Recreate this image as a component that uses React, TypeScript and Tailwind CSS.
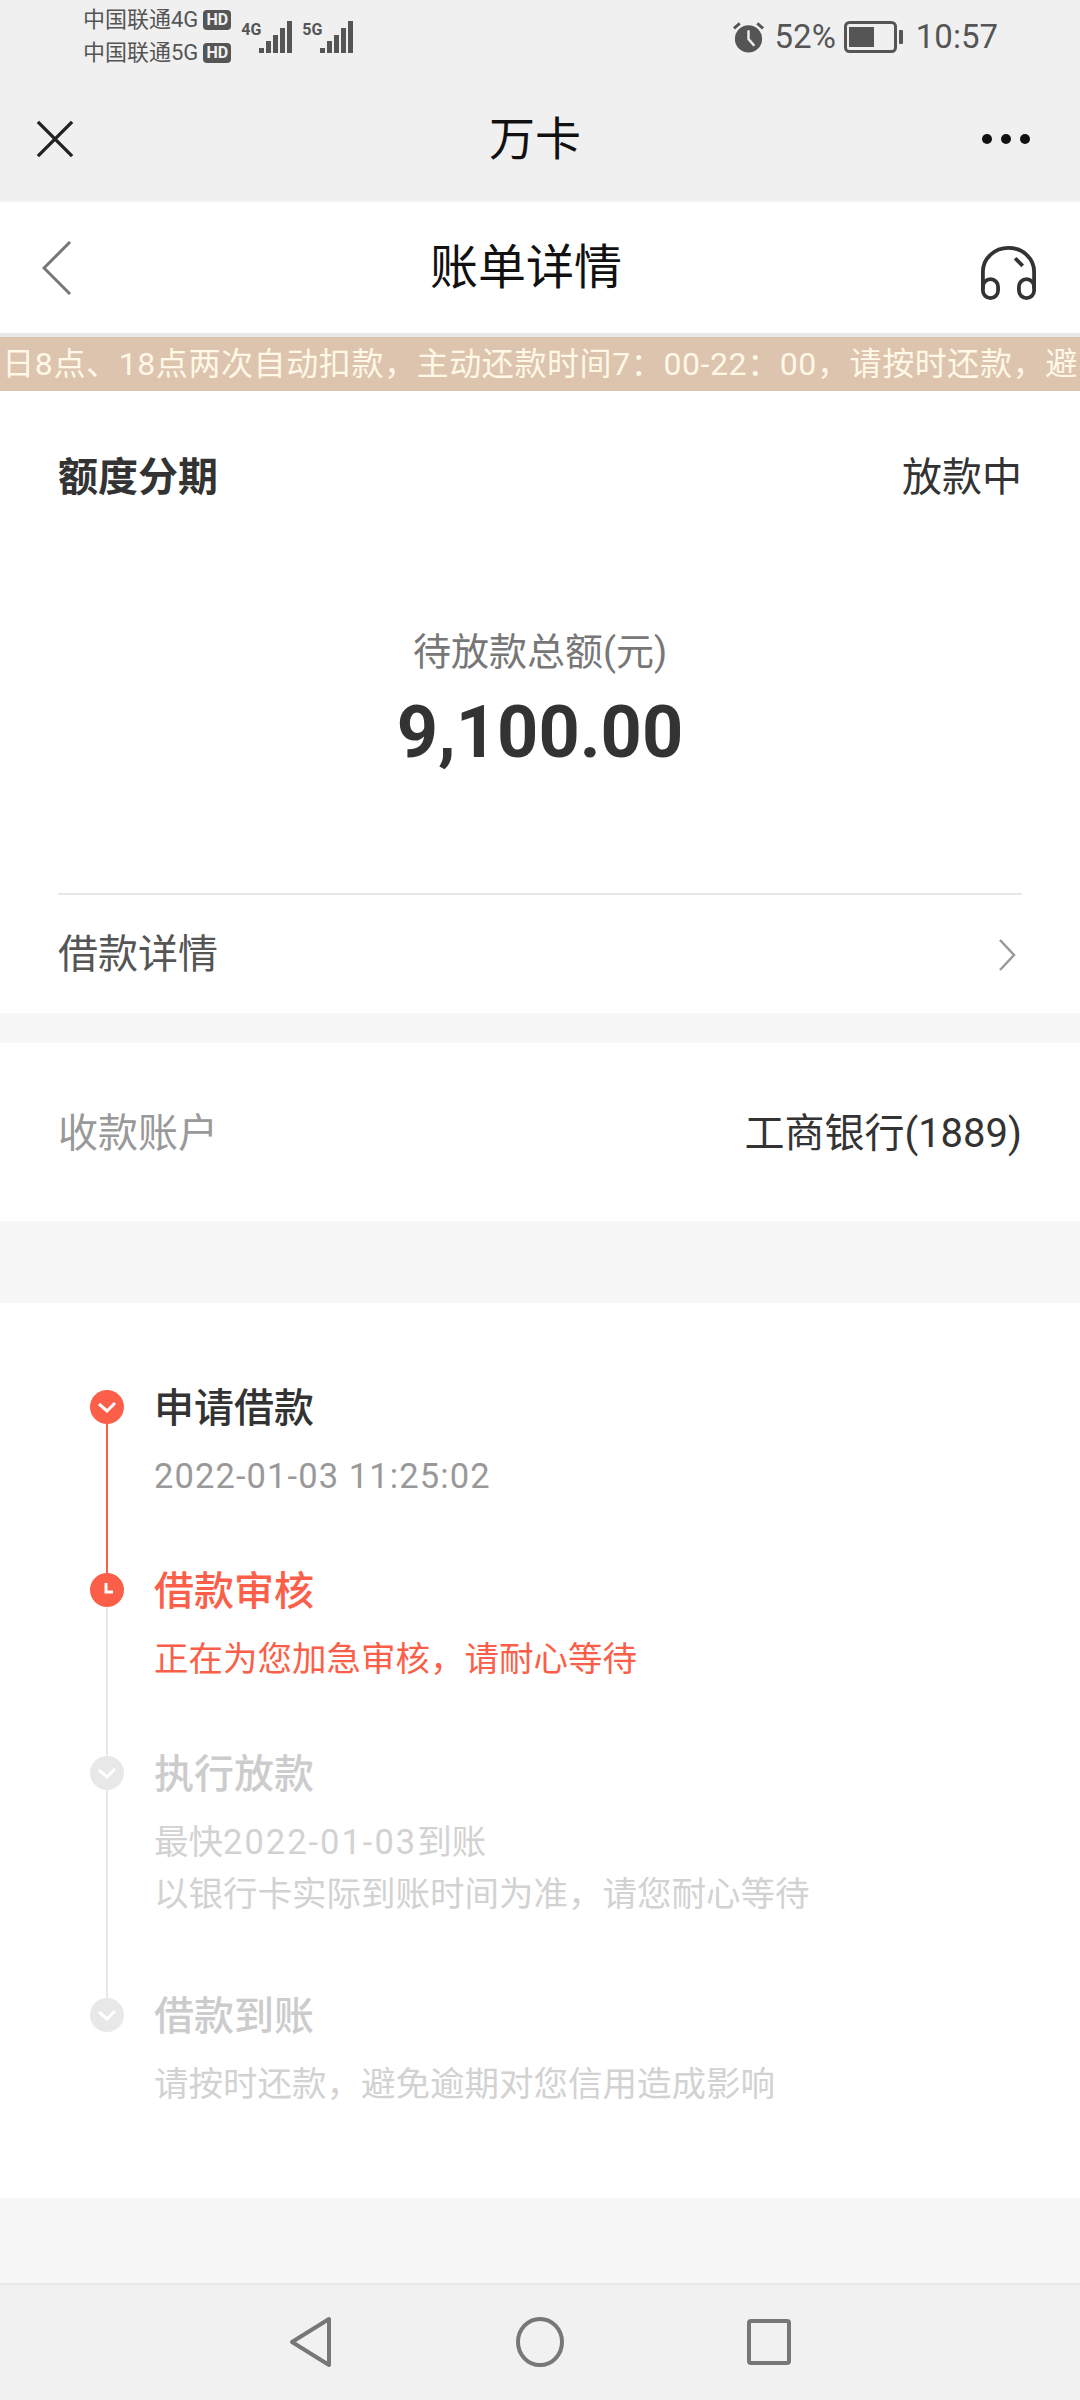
const FONT = "font-['Roboto','Noto_Sans_CJK_SC',sans-serif]";

const steps = [
  {
    title: '申请借款',
    lines: [<span className="tracking-[1.1px]">2022-01-03 11:25:02</span>],
    state: 'done',
    height: 'h-[183px]',
  },
  {
    title: '借款审核',
    lines: ['正在为您加急审核，请耐心等待'],
    state: 'active',
    height: 'h-[183px]',
  },
  {
    title: '执行放款',
    lines: [
      <>
        最快<span className="tracking-[2px]">2022-01-03</span>到账
      </>,
      '以银行卡实际到账时间为准，请您耐心等待',
    ],
    state: 'todo',
    height: 'h-[242px]',
  },
  {
    title: '借款到账',
    lines: ['请按时还款，避免逾期对您信用造成影响'],
    state: 'todo',
    height: 'h-[120px]',
  },
];

const StepIcon = ({ state }: { state: string }) => {
  const fill = state === 'todo' ? '#e8e8e8' : '#fb5f49';
  return (
    <svg width="34" height="34" viewBox="0 0 34 34" className="relative z-10 shrink-0">
      <circle cx="17" cy="17" r="17" fill={fill} />
      {state === 'active' ? (
        <path d="M16 10v9h7" fill="none" stroke="#fff" strokeWidth="3" />
      ) : (
        <path d="M9 14l8 7 8-8" fill="none" stroke="#fff" strokeWidth="3" />
      )}
    </svg>
  );
};

const Signal = ({ label }: { label: string }) => (
  <div className="flex h-[32px] items-end">
    <span className="w-[18px] self-start pt-[1px] text-[16px] leading-[16px] font-bold text-[#555]">{label}</span>
    <div className="flex items-end gap-[2px]">
      <div className="h-[5px] w-[5px] bg-[#555]" />
      <div className="h-[12px] w-[5px] bg-[#555]" />
      <div className="h-[18px] w-[5px] bg-[#555]" />
      <div className="h-[25px] w-[5px] bg-[#555]" />
      <div className="h-[32px] w-[5px] bg-[#555]" />
    </div>
  </div>
);

const HdBadge = () => (
  <span className="w-[28px] rounded-[4px] bg-[#555] text-center text-[16px] leading-[20px] font-bold text-[#f0f0f0]">HD</span>
);

const App = () => {
  return (
    <div className={`${FONT} flex h-[2400px] w-[1080px] flex-col overflow-hidden bg-[#f7f7f7]`}>
      {/* status bar */}
      <div className="flex h-[80px] items-center justify-between bg-[#f0f0f0] pr-[82px] pb-[7px] pl-[83px] text-[#555]">
        <div className="flex items-center gap-[10px]">
          <div className="flex flex-col gap-[9px] text-[22px] leading-[24px]">
            <div className="flex items-center gap-[5px]">
              <span>中国联通4G</span>
              <HdBadge />
            </div>
            <div className="flex items-center gap-[5px]">
              <span>中国联通5G</span>
              <HdBadge />
            </div>
          </div>
          <Signal label="4G" />
          <Signal label="5G" />
        </div>
        <div className="flex items-center text-[33px]">
          <svg width="33" height="34" viewBox="0 0 34 34">
            <circle cx="17" cy="19" r="14" fill="#555" />
            <path d="M17 10v9l6 7" fill="none" stroke="#f0f0f0" strokeWidth="2.5" />
            <path d="M2 8l6-5M32 8l-6-5" stroke="#555" strokeWidth="3" />
          </svg>
          <span className="ml-[10px]">52%</span>
          <svg width="59" height="32" viewBox="0 0 59 32" className="ml-[8px]">
            <rect x="1.5" y="1.5" width="50" height="29" rx="4" fill="none" stroke="#555" strokeWidth="3" />
            <rect x="5" y="6" width="25" height="20" fill="#555" />
            <rect x="55" y="9" width="4" height="14" rx="1" fill="#555" />
          </svg>
          <span className="ml-[13px]">10:57</span>
        </div>
      </div>

      {/* wechat title bar */}
      <div className="flex h-[121px] items-center justify-between bg-[#f0f0f0] pr-[50px] pb-[4px] pl-[36px]">
        <svg width="38" height="38" viewBox="0 0 40 40">
          <path d="M2 2l36 36M38 2L2 38" stroke="#222" strokeWidth="3.5" />
        </svg>
        <span className="ml-[14px] text-[46px] leading-none text-[#111]">万卡</span>
        <div className="flex gap-[9px]">
          <div className="h-[10px] w-[10px] rounded-full bg-[#111]" />
          <div className="h-[10px] w-[10px] rounded-full bg-[#111]" />
          <div className="h-[10px] w-[10px] rounded-full bg-[#111]" />
        </div>
      </div>

      {/* page title */}
      <div className="flex h-[136px] items-center justify-between border-t-[2px] border-b-[4px] border-t-[#f8f8f8] border-b-[#e8e8e8] bg-white pr-[43px] pl-[42px]">
        <svg width="30" height="54" viewBox="0 0 30 54">
          <path d="M28 1L2 27l26 26" fill="none" stroke="#777" strokeWidth="3" />
        </svg>
        <span className="text-[48px] leading-none text-[#111]">账单详情</span>
        <svg width="57" height="55" viewBox="0 0 60 58" fill="none" stroke="#333" strokeWidth="4" className="mt-[8px]">
          <path d="M3 46V28a27 25 0 0 1 54 0v18" />
          <rect x="3" y="36" width="16" height="20" rx="8" />
          <rect x="41" y="36" width="16" height="20" rx="8" />
          <path d="M37 14l8 8" />
        </svg>
      </div>

      {/* notice */}
      <div className="flex h-[54px] items-center justify-center overflow-hidden bg-[#dcc4ae] text-[32px] tracking-[0.6px] whitespace-nowrap text-[#fff8e6]">
        <span>日8点、18点两次自动扣款，主动还款时间7：00-22：00，请按时还款，避</span>
      </div>

      {/* amount card */}
      <div className="bg-white px-[58px]">
        <div className="flex h-[172px] items-center justify-between pt-[2px]">
          <span className="text-[40px] font-bold text-[#333]">额度分期</span>
          <span className="text-[40px] text-[#333]">放款中</span>
        </div>
        <div className="flex h-[332px] flex-col items-center border-b-[2px] border-[#e8e8e8] pt-[64px]">
          <span className="text-[38px] leading-[50px] text-[#777]">待放款总额(元)</span>
          <span className="mt-[16px] text-[72px] leading-[80px] font-bold text-[#333]">9,100.00</span>
        </div>
        <div className="flex h-[118px] items-center justify-between pt-[2px]">
          <span className="text-[40px] text-[#555]">借款详情</span>
          <svg width="18" height="32" viewBox="0 0 18 32" className="mr-[6px]">
            <path d="M2 1l14 15L2 31" fill="none" stroke="#999" strokeWidth="2.5" />
          </svg>
        </div>
      </div>

      {/* account */}
      <div className="mt-[30px] flex h-[178px] items-center justify-between bg-white px-[58px] pt-[4px]">
        <span className="text-[40px] text-[#999]">收款账户</span>
        <span className="text-[40px] text-[#333]">工商银行(1889)</span>
      </div>

      {/* timeline */}
      <div className="mt-[82px] h-[895px] bg-white pt-[87px] pl-[90px]">
        {steps.map((step, i) => (
          <div key={step.title} className={`relative flex ${step.height}`}>
            {i < steps.length - 1 && (
              <div className={`absolute top-[14px] bottom-[-14px] left-[16px] w-[2px] ${step.state === 'done' ? 'bg-[#fb5f49]' : 'bg-[#e8e8e8]'}`} />
            )}
            <StepIcon state={step.state} />
            <div className="ml-[30px] flex flex-col">
              <span
                className={`text-[40px] leading-[38px] font-medium ${
                  step.state === 'done' ? 'text-[#333]' : step.state === 'active' ? 'text-[#fb5f49]' : 'text-[#ccc]'
                }`}
              >
                {step.title}
              </span>
              <div
                className={`mt-[22px] text-[34.5px] leading-[52px] ${
                  step.state === 'done' ? 'text-[#999]' : step.state === 'active' ? 'text-[#fb5f49]' : 'text-[#d2d2d2]'
                }`}
              >
                {step.lines.map((line, j) => (
                  <div key={j}>{line}</div>
                ))}
              </div>
            </div>
          </div>
        ))}
      </div>

      {/* android nav */}
      <div className="mt-[85px] flex h-[117px] items-center justify-center gap-[183px] border-t-[2px] border-[#e8e8e8] bg-[#f1f1f1] pb-[2px]">
        <svg width="44" height="52" viewBox="0 0 44 52">
          <path d="M3 26L40 3v46z" fill="none" stroke="#777" strokeWidth="4" strokeLinejoin="round" />
        </svg>
        <svg width="48" height="50" viewBox="0 0 48 50">
          <ellipse cx="24" cy="25" rx="22" ry="23" fill="none" stroke="#777" strokeWidth="4" />
        </svg>
        <svg width="44" height="46" viewBox="0 0 44 46">
          <rect x="2" y="2" width="40" height="42" rx="2" fill="none" stroke="#777" strokeWidth="4" />
        </svg>
      </div>
    </div>
  );
};

export default App;
